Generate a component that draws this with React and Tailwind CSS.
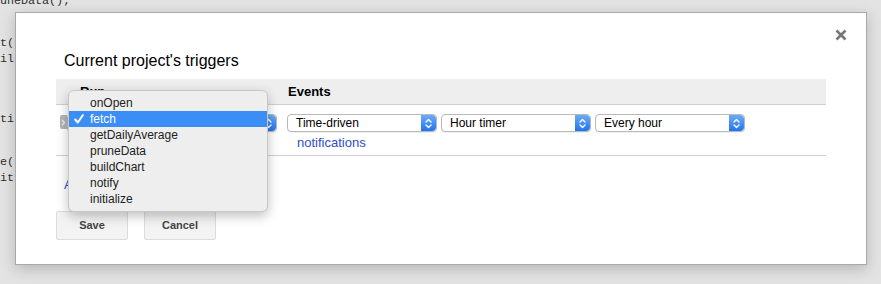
import React from 'react';

const codeLines = [
  { text: 'uneData();', mt: 'mt-[-7px]' },
  { text: 't(', mt: 'mt-[26px]' },
  { text: 'il', mt: 'mt-0' },
  { text: 'ti', mt: 'mt-[44px]' },
  { text: 'e(', mt: 'mt-[27px]' },
  { text: 'it', mt: 'mt-0' },
];

const functions = ['onOpen', 'fetch', 'getDailyAverage', 'pruneData', 'buildChart', 'notify', 'initialize'];

const Stepper = () => (
  <div className="flex items-center justify-center w-[15px] self-stretch rounded-r-[4px] bg-gradient-to-b from-[#6aaaf8] to-[#1f74ee]">
    <svg width="7" height="11" viewBox="0 0 7 11" fill="none" stroke="white" strokeWidth="1.4" strokeLinecap="round" strokeLinejoin="round">
      <path d="M1 4 L3.5 1.5 L6 4" />
      <path d="M1 7 L3.5 9.5 L6 7" />
    </svg>
  </div>
);

const Select = ({ label, width = 'w-[150px]' }) => (
  <div className={`flex h-[18px] ${width} rounded-[4px] border border-[#b9b9b9] bg-white shadow-[0_1px_0_rgba(0,0,0,0.06)] overflow-hidden`}>
    <div className="flex-1 pl-[8px] text-[12px] leading-[16px] text-black truncate">{label}</div>
    <Stepper />
  </div>
);

export default function App() {
  return (
    <div className="relative w-[881px] h-[284px] overflow-hidden bg-[#e3e3e3] font-['Liberation_Sans',Arial,sans-serif]">
      {/* editor code behind the overlay */}
      <div className="flex flex-col font-['Liberation_Mono',monospace] text-[11.7px] leading-[16px] text-[#2e2e2e]">
        {codeLines.map((l, i) => (
          <div key={i} className={l.mt}>{l.text}</div>
        ))}
      </div>

      {/* dialog */}
      <div className="absolute left-[15px] top-[12px] w-[852px] h-[253px] bg-white border border-[#a9a9a9] shadow-[0_4px_14px_rgba(0,0,0,0.2)] px-[40px] pt-[38px]">
        <button className="absolute right-[19px] top-[16px] text-[#777]">
          <svg width="12" height="12" viewBox="0 0 12 12" stroke="currentColor" strokeWidth="2.6">
            <path d="M1.5 1.5 L10.5 10.5 M10.5 1.5 L1.5 10.5" />
          </svg>
        </button>

        <h2 className="pl-[8px] text-[16px] leading-[20px] text-black">Current project's triggers</h2>

        <div className="mt-[8px]">
          <div className="flex h-[26px] items-center bg-[#eeeeee] border-b border-[#cfcfcf] text-[13px] font-bold text-black">
            <div className="w-[231px] pl-[24px]">Run</div>
            <div className="pl-[1px]">Events</div>
          </div>
          <div className="flex h-[51px] border-b border-[#cfcfcf] pt-[9px]">
            <div className="flex w-[231px] h-[18px]">
              <div className="ml-[4px] w-[7px] h-[14px] mt-[1px] rounded-l-[2px] bg-[#b5b5b5] flex items-center justify-center">
                <svg width="5" height="7" viewBox="0 0 5 7" fill="none" stroke="#eee" strokeWidth="1.3">
                  <path d="M1 1 L3.5 3.5 L1 6" />
                </svg>
              </div>
              <Select label="fetch" width="w-[210px]" />
            </div>
            <div className="flex flex-col">
              <div className="flex gap-[4px]">
                <Select label="Time-driven" />
                <Select label="Hour timer" />
                <Select label="Every hour" />
              </div>
              <a className="mt-[3px] ml-[10px] text-[13px] leading-[16px] text-[#2b4fcb]">notifications</a>
            </div>
          </div>
          <div className="pl-[8px] pt-[21px] text-[13px] leading-[16px] text-[#2b4fcb]">Add a new trigger</div>
        </div>

        <div className="mt-[18px] flex gap-[16px]">
          <button className="w-[72px] h-[29px] rounded-[2px] border border-[#dcdcdc] bg-[#f3f3f3] text-[11px] font-bold text-[#444]">Save</button>
          <button className="w-[72px] h-[29px] rounded-[2px] border border-[#dcdcdc] bg-[#f3f3f3] text-[11px] font-bold text-[#444]">Cancel</button>
        </div>
      </div>

      {/* open dropdown menu for the Run select */}
      <div className="absolute left-[68px] top-[90px] w-[200px] py-[4px] rounded-[6px] bg-[#eeeeee] border border-[#c8c8c8] shadow-[0_4px_12px_rgba(0,0,0,0.25)]">
        {functions.map((f) => (
          <div
            key={f}
            className={`relative h-[16px] pl-[21px] text-[12px] leading-[16px] ${f === 'fetch' ? 'bg-[#3b8ef6] text-white' : 'text-[#222]'}`}
          >
            {f === 'fetch' && (
              <svg className="absolute left-[5px] top-[3px]" width="10" height="10" viewBox="0 0 10 10" fill="none" stroke="white" strokeWidth="2" strokeLinecap="round" strokeLinejoin="round">
                <path d="M1.2 5.5 L3.8 8.5 L8.8 1.2" />
              </svg>
            )}
            {f}
          </div>
        ))}
      </div>
    </div>
  );
}
